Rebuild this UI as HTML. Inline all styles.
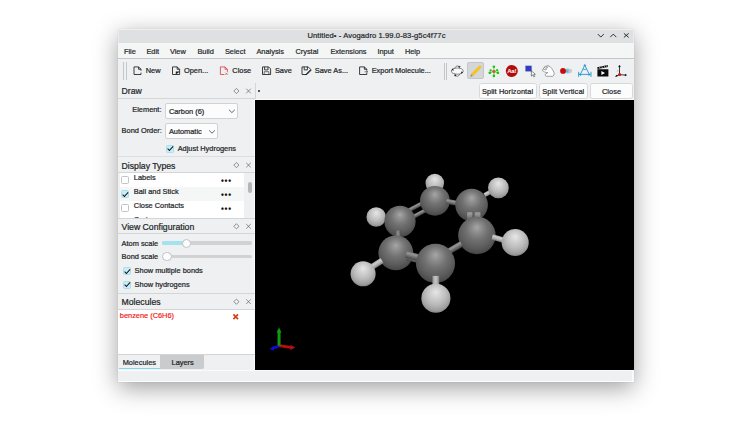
<!DOCTYPE html>
<html><head><meta charset="utf-8">
<title>Untitled - Avogadro</title>
<style>
html,body{margin:0;padding:0;background:#fff;}
body{width:752px;height:423px;position:relative;overflow:hidden;font-family:"Liberation Sans",sans-serif;font-size:7.4px;color:#232629;}
#frame{position:absolute;left:118px;top:28.5px;width:516px;height:353px;border-radius:3px 3px 0 0;box-shadow:0 6px 24px 0 rgba(0,0,0,.38),0 0 1px rgba(0,0,0,.25);overflow:hidden;background:#eff0f1}
#win{position:absolute;left:0;top:0;width:516px;height:353px;background:#eff0f1;}
#title{position:absolute;left:0;top:0;width:516px;height:14px;background:#dee0e2;border-radius:2.5px 2.5px 0 0;text-align:center;line-height:14.5px;font-size:7.6px;letter-spacing:0.09px;-webkit-text-stroke:0.2px #232629;padding-left:1px;box-sizing:border-box}
#menu{position:absolute;left:0;top:14px;width:516px;height:15.6px;background:#f4f5f5;border-bottom:0.6px solid #c4c6c8;}
#menu span{position:absolute;top:1.1px;line-height:16px;-webkit-text-stroke:0.2px #232629;margin-left:-0.1px}
.t{position:absolute;white-space:nowrap;line-height:10px;height:10px;-webkit-text-stroke:0.22px #232629;}
.h{position:absolute;white-space:nowrap;font-size:8.7px;line-height:12px;height:12px;left:3.5px;margin-top:0.6px;letter-spacing:0;-webkit-text-stroke:0.22px #232629;}
.ln{position:absolute;left:0;width:137px;height:0.7px;background:#d3d5d7;}
#vp{position:absolute;left:137.4px;top:71.5px;width:378.4px;height:269.6px;background:#000;box-shadow:-1.1px 0 0 #fafafa,0 -0.9px 0 #fafafa;}
.cb{position:absolute;width:8px;height:8px;border:0.6px solid #c2c4c6;border-radius:1.6px;background:#fff;box-sizing:border-box;}
.cb.on{background:#c9edf6;border-color:#a9def0;}
.cb.on:after{content:"";position:absolute;left:1.9px;top:-0.2px;width:2.2px;height:4.6px;border:solid #0c0c0c;border-width:0 1.3px 1.3px 0;transform:rotate(42deg);}
.btn{position:absolute;background:#fcfcfc;border:0.6px solid #d6d8da;border-radius:2.5px;box-sizing:border-box;text-align:center;line-height:15.8px;height:16.2px;top:54px;letter-spacing:0.1px;-webkit-text-stroke:0.22px #232629;}
.combo{position:absolute;background:#fcfcfc;border:0.6px solid #d0d2d4;border-radius:2px;box-sizing:border-box;height:15.7px;line-height:15.2px;padding-left:2.5px;-webkit-text-stroke:0.22px #232629;}
.ic{position:absolute;}
.dots{position:absolute;left:101.2px;font-size:8.2px;letter-spacing:0.75px;line-height:6px;font-weight:bold;color:#111;}
svg{overflow:visible}
</style></head><body>
<div id="frame"><div id="win">
<div id="title" style="box-shadow:inset 0 1px 0 #eef0f3,inset 0.8px 0 0 #eceef0,inset -0.8px 0 0 #eceef0">Untitled• - Avogadro 1.99.0-83-g5c4f77c</div>
<svg class="ic" style="left:478px;top:3.2px" width="34" height="7" viewBox="596 32.5 34 7" fill="none" stroke="#232629" stroke-width="0.95"><path d="M597.8 34.6 L600.8 37.6 L603.8 34.6"/><path d="M610.3 37.6 L613.3 34.6 L616.3 37.6"/><path d="M623.9 33.9 L628.7 37.9 M628.7 33.9 L623.9 37.9" transform="translate(0,0)"/></svg>
<div id="menu">
<span style="left:6px">File</span><span style="left:28.5px">Edit</span><span style="left:52px">View</span><span style="left:79.5px">Build</span><span style="left:107px">Select</span><span style="left:138.5px">Analysis</span><span style="left:177.5px">Crystal</span><span style="left:212.5px">Extensions</span><span style="left:259.5px">Input</span><span style="left:287px">Help</span>
</div>

<!-- toolbar -->
<div id="tb">
<div style="position:absolute;left:5.4px;top:33px;width:0.6px;height:18px;background:#c4c6c8"></div>
<div style="position:absolute;left:7.5px;top:33px;width:0.6px;height:18px;background:#c4c6c8"></div>
<div class="t" style="left:27.7px;top:37px">New</div>
<div class="t" style="left:66px;top:37px">Open...</div>
<div class="t" style="left:114.3px;top:37px">Close</div>
<div class="t" style="left:156.9px;top:37px">Save</div>
<div class="t" style="left:196.8px;top:37px">Save As...</div>
<div class="t" style="left:253.7px;top:37px">Export Molecule...</div>
<div style="position:absolute;left:326.4px;top:34px;width:0.6px;height:17px;background:#c4c6c8"></div>
<div style="position:absolute;left:328px;top:34px;width:0.6px;height:17px;background:#c4c6c8"></div>
<div style="position:absolute;left:349.4px;top:33.4px;width:16.6px;height:16.8px;background:#d4d6d8;border-radius:2px;border:0.5px solid #c3c5c7;box-sizing:border-box"></div>
</div>

<!-- viewport header -->
<div style="position:absolute;left:137px;top:54px;width:0.7px;height:288px;background:#d3d5d7"></div>
<div style="position:absolute;left:140.4px;top:61.2px;width:2px;height:2px;border-radius:1px;background:#1b2230"></div>
<div class="btn" style="left:360.5px;width:58.1px">Split Horizontal</div>
<div class="btn" style="left:420.5px;width:49.7px">Split Vertical</div>
<div class="btn" style="left:471.8px;width:43.6px">Close</div>
<div id="vp"><!--MOL--><svg style="position:absolute;left:0;top:0" width="378.4" height="269.6" viewBox="255.4 100 378.4 269.6">
<defs>
<radialGradient id="gc" cx="0.5" cy="0.4" r="0.62" fx="0.5" fy="0.28"><stop offset="0" stop-color="#a6a6a6"/><stop offset="0.2" stop-color="#8e8e8e"/><stop offset="0.45" stop-color="#727272"/><stop offset="0.75" stop-color="#5c5c5c"/><stop offset="0.92" stop-color="#4c4c4c"/><stop offset="1" stop-color="#404040"/></radialGradient>
<radialGradient id="gh" cx="0.5" cy="0.4" r="0.62" fx="0.5" fy="0.28"><stop offset="0" stop-color="#e6e6e6"/><stop offset="0.3" stop-color="#d0d0d0"/><stop offset="0.6" stop-color="#b9b9b9"/><stop offset="0.85" stop-color="#9e9e9e"/><stop offset="1" stop-color="#828282"/></radialGradient>
<linearGradient id="bc" x1="0" y1="0" x2="0" y2="1"><stop offset="0" stop-color="#747474"/><stop offset="0.28" stop-color="#969696"/><stop offset="0.6" stop-color="#707070"/><stop offset="1" stop-color="#444444"/></linearGradient>
<linearGradient id="bh" x1="0" y1="0" x2="0" y2="1"><stop offset="0" stop-color="#a8a8a8"/><stop offset="0.3" stop-color="#cccccc"/><stop offset="0.6" stop-color="#b4b4b4"/><stop offset="1" stop-color="#7a7a7a"/></linearGradient>
<linearGradient id="bv" x1="0" y1="0" x2="1" y2="0"><stop offset="0" stop-color="#8a8a8a"/><stop offset="0.4" stop-color="#c6c6c6"/><stop offset="0.7" stop-color="#b4b4b4"/><stop offset="1" stop-color="#7a7a7a"/></linearGradient>
<linearGradient id="bv3" x1="0" y1="0" x2="1" y2="0"><stop offset="0" stop-color="#5a5a5a"/><stop offset="0.4" stop-color="#8c8c8c"/><stop offset="0.7" stop-color="#787878"/><stop offset="1" stop-color="#484848"/></linearGradient>
<linearGradient id="gv" gradientUnits="userSpaceOnUse" x1="0" y1="212" x2="0" y2="220"><stop offset="0" stop-color="#a4a4a4"/><stop offset="0.5" stop-color="#868686"/><stop offset="1" stop-color="#585858"/></linearGradient>
</defs>
<circle cx="435.2" cy="183" r="9.30" fill="url(#gh)"/>
<circle cx="376.6" cy="217" r="9.75" fill="url(#gh)"/>
<rect x="0" y="-2.20" width="10.25" height="4.40" fill="url(#bh)" transform="translate(485.00 195.10) rotate(-28.6)"/>
<circle cx="498.8" cy="187.8" r="10.40" fill="url(#gh)"/>
<rect x="0" y="-2.00" width="18.70" height="4.00" fill="url(#bc)" transform="translate(408.00 211.00) rotate(-28.1)"/>
<rect x="0" y="-2.00" width="16.42" height="4.00" fill="url(#bc)" transform="translate(412.50 217.40) rotate(-28.0)"/>
<circle cx="435.3" cy="200.8" r="14.90" fill="url(#gc)"/>
<rect x="0" y="-2.50" width="15.46" height="5.00" fill="url(#bc)" transform="translate(446.80 201.30) rotate(10.4)"/>
<circle cx="400.4" cy="221.4" r="15.60" fill="url(#gc)"/>
<circle cx="472" cy="205" r="16.30" fill="url(#gc)"/>
<rect x="395.90" y="230.60" width="5.40" height="14.40" fill="url(#bv3)"/>
<rect x="467.45" y="212.30" width="5.30" height="15.70" rx="1.2" fill="url(#gv)"/>
<rect x="475.15" y="212.30" width="5.70" height="15.70" rx="1.2" fill="url(#gv)"/>
<circle cx="396.2" cy="252.9" r="17.40" fill="url(#gc)"/>
<circle cx="477.3" cy="235.4" r="18.75" fill="url(#gc)"/>
<rect x="0" y="-3.00" width="17.37" height="6.00" fill="url(#bc)" transform="translate(407.20 257.20) rotate(14.7)"/>
<rect x="0" y="-3.40" width="18.09" height="6.80" fill="url(#bc)" transform="translate(406.50 254.40) rotate(14.7)"/>
<rect x="0" y="-3.00" width="19.77" height="6.00" fill="url(#bc)" transform="translate(445.00 253.90) rotate(-30.7)"/>
<rect x="0" y="-2.90" width="17.23" height="5.80" fill="url(#bh)" transform="translate(368.00 269.80) rotate(-32.7)"/>
<rect x="0" y="-2.65" width="16.04" height="5.30" fill="url(#bh)" transform="translate(492.60 236.90) rotate(16.3)"/>
<circle cx="363.5" cy="273.8" r="12.55" fill="url(#gh)"/>
<circle cx="515.6" cy="242.5" r="13.55" fill="url(#gh)"/>
<circle cx="435.9" cy="263.4" r="19.55" fill="url(#gc)"/>
<rect x="432.80" y="275.90" width="6.80" height="16.10" fill="url(#bv)"/>
<circle cx="436.3" cy="298.3" r="14.55" fill="url(#gh)"/>
<g stroke-linecap="butt">
<line x1="279.5" y1="346" x2="273" y2="348.2" stroke="#0c0cd8" stroke-width="2.6"/><path d="M274.6 345.8 L270 349 L274.4 350.8Z" fill="#0c0cd8"/>
<line x1="279.4" y1="345.6" x2="291.4" y2="347.4" stroke="#b80e0e" stroke-width="2.8"/><path d="M291 344.9 L295.7 347.5 L290.6 349.9Z" fill="#b80e0e"/>
<line x1="279.45" y1="345.6" x2="279.45" y2="332" stroke="#129a12" stroke-width="3"/><path d="M277 332.6 L279.45 327.6 L281.9 332.6Z" fill="#129a12"/>
</g>
</svg><!--/MOL--></div>

<div style="position:absolute;left:0;top:341.2px;width:516px;height:1.1px;background:#fbfbfb"></div>
<div style="position:absolute;left:513.8px;top:342px;width:2.2px;height:11px;background:#fafafa"></div>
<div style="position:absolute;left:0;top:352px;width:516px;height:1px;background:#fdfdfd"></div>
<!-- left docks -->
<div id="dock" style="position:absolute;left:0;top:0;width:137px;height:353px">
 <!-- Draw -->
 <div class="h" style="top:56.3px">Draw</div>
 <div class="ln" style="top:69.9px"></div>
 <div class="t" style="left:14.3px;top:76.5px">Element:</div>
 <div class="combo" style="left:47.4px;top:74.4px;width:72.8px">Carbon (6)</div>
 <div class="t" style="left:3.6px;top:97px">Bond Order:</div>
 <div class="combo" style="left:47.4px;top:94.9px;width:52.4px">Automatic</div>
 <div class="cb on" style="left:48.2px;top:116px"></div>
 <div class="t" style="left:59.7px;top:115px">Adjust Hydrogens</div>
 <!-- Display types -->
 <div class="ln" style="top:127.6px;height:1px;background:#dcdee0"></div>
 <div class="h" style="top:130.8px">Display Types</div>
 <div class="ln" style="top:143.9px"></div>
 <div style="position:absolute;left:1.8px;top:144.5px;width:124.5px;height:44.8px;background:#fff;overflow:hidden">
   <div style="position:absolute;left:0;top:14.3px;width:124.5px;height:13.8px;background:#f5f6f6"></div>
   <div class="cb" style="left:1.6px;top:3px"></div>
   <div class="cb on" style="left:1.6px;top:17px"></div>
   <div class="cb" style="left:1.6px;top:30.8px"></div>
   <div class="t" style="left:14px;top:0.2px">Labels</div>
   <div class="t" style="left:14px;top:13.8px">Ball and Stick</div>
   <div class="t" style="left:14px;top:27.8px">Close Contacts</div>
   <div class="t" style="left:14px;top:42.0px">Cartoons</div>
   <div class="dots" style="top:6.1px">•••</div>
   <div class="dots" style="top:20.1px">•••</div>
   <div class="dots" style="top:34.1px">•••</div>
 </div>
 <div style="position:absolute;left:129.8px;top:153.9px;width:3.8px;height:11px;border-radius:2px;background:#b4b6b8"></div>
 <!-- View configuration -->
 <div class="ln" style="top:189.4px"></div>
 <div class="h" style="top:191.8px">View Configuration</div>
 <div class="ln" style="top:204.9px"></div>
 <div class="t" style="left:3.6px;top:210.1px">Atom scale</div>
 <div style="position:absolute;left:44px;top:213.2px;width:90px;height:3.4px;border-radius:1.7px;background:#d0d2d4;margin-top:-0.3px"></div>
 <div style="position:absolute;left:44px;top:213.2px;width:24px;height:3.4px;border-radius:1.7px;background:#a3e2ef;margin-top:-0.3px"></div>
 <div style="position:absolute;left:63.9px;top:210px;width:9.2px;height:9.2px;border-radius:5px;background:#fcfcfc;border:0.6px solid #c0c2c4;box-sizing:border-box"></div>
 <div class="t" style="left:3.6px;top:223.8px">Bond scale</div>
 <div style="position:absolute;left:44px;top:226.9px;width:90px;height:3.4px;border-radius:1.7px;background:#d0d2d4;margin-top:-0.3px"></div>
 <div style="position:absolute;left:44.4px;top:223.7px;width:9.2px;height:9.2px;border-radius:5px;background:#fcfcfc;border:0.6px solid #c0c2c4;box-sizing:border-box"></div>
 <div class="cb on" style="left:4.7px;top:238.2px"></div>
 <div class="t" style="left:16.6px;top:237.2px">Show multiple bonds</div>
 <div class="cb on" style="left:4.7px;top:252px"></div>
 <div class="t" style="left:16.6px;top:251px">Show hydrogens</div>
 <!-- Molecules -->
 <div class="ln" style="top:264.7px"></div>
 <div class="h" style="top:267.2px">Molecules</div>
 <div class="ln" style="top:280.4px"></div>
 <div style="position:absolute;left:0.4px;top:281px;width:135.6px;height:44.8px;background:#fff"></div>
 <div class="t" style="left:1.8px;top:282.8px;color:#f01010;-webkit-text-stroke:0.15px #f01010">benzene (C6H6)</div>
 <div class="ln" style="top:325.6px"></div>
 <div style="position:absolute;left:42.4px;top:326.2px;width:43.3px;height:14px;background:#c9cbcc;border-radius:0 0 2px 0"></div>
 <div style="position:absolute;left:0.6px;top:339px;width:41.8px;height:1.3px;background:#7fd9ea"></div>
 <div class="t" style="left:4.7px;top:329.6px">Molecules</div>
 <div class="t" style="left:53.6px;top:329.6px">Layers</div>
</div>
<!--ICONS--><svg style="position:absolute;left:0;top:0" width="516" height="100" viewBox="118 28.5 516 100" fill="none">
<!-- New -->
<g stroke="#1c1e20" stroke-width="0.85" stroke-linejoin="miter">
<path d="M141 72.2 V74 H134 V66.4 H138.6 L141 68.8 V70.2"/><path d="M138.6 66.4 V68.8 H141"/>
<!-- Open -->
<path d="M172.5 66.4 H177.2 L179.6 68.8 V74 H172.5 Z"/><path d="M177.2 66.4 V68.8 H179.6"/><path d="M176 73.6 V71.2 H179.2 Z" fill="#1c1e20" stroke-width="0.4"/>
<!-- Save -->
<path d="M262.5 66.4 H268.6 L270.6 68.4 V74 H262.5 Z"/><path d="M264.6 66.4 V69.4 H268 V66.4"/><path d="M264.2 74 V71.2 H268.9 V74" stroke-width="0.6"/>
<!-- Save as -->
<path d="M306.5 74 H302 V66.4 H308.2 L310.4 68.6"/><path d="M304.2 66.4 V69.4 H307.4 V66.4"/><path d="M310.8 68.8 L306.6 73 L305.4 74.4 L307.2 73.8 L311.2 69.8 Z" fill="#1c1e20" stroke-width="0.5"/>
<!-- Export -->
<path d="M366.8 72.6 V74 H359.6 V66.4 H364.4 L366.8 68.8 V70"/><path d="M364.4 66.4 V68.8 H366.8"/><path d="M364.6 71.3 H367.6 M366.4 70.2 L367.6 71.3 L366.4 72.4" stroke-width="0.6"/>
</g>
<!-- Close -->
<g stroke="#da4453" stroke-width="0.85"><path d="M224.4 74 H220.4 V66.4 H225 L227.4 68.8 V71.4"/><path d="M225 66.4 V68.8 H227.4"/><path d="M225.4 72.2 L227.6 74.4 M227.6 72.2 L225.4 74.4" stroke-width="0.7"/></g>
<!-- Navigate -->
<g stroke="#2a2a2a" stroke-width="0.55"><ellipse cx="457.3" cy="70.6" rx="2.9" ry="5.2" fill="#fafafa"/><ellipse cx="457.3" cy="70.6" rx="6" ry="3.1" fill="#fafafa"/>
<path d="M451.8 69.6 l1.2 -1.6 l0.5 1.9z M458.6 65.5 l1.9 0.5 l-1.5 1.1z M456 75.7 l-1.9 -0.5 l1.5 -1.1z M462.8 71.6 l-1.2 1.6 l-0.5 -1.9z" fill="#111" stroke-width="0.25"/></g>
<!-- Pencil -->
<path d="M479.7 65 L481.5 66.8 L472.9 75.4 L471.1 73.6 Z" fill="#f8c712" stroke="#e4b010" stroke-width="0.25"/><path d="M471.1 73.6 L472.9 75.4 L470.2 76.4 Z" fill="#8a8f98"/>
<!-- Template -->
<g stroke="#20b020" stroke-width="0.6"><path d="M493.9 70.9 L493.9 66.2 M493.9 70.9 L490.5 69.9 M493.9 70.9 L497.3 69.8 M493.9 70.9 L489.8 72.3 M493.9 70.9 L497.9 72.3 M493.9 70.9 L493.9 75.4"/></g>
<g fill="#12c812"><circle cx="493.9" cy="66.2" r="1.3"/><circle cx="489.8" cy="72.3" r="1.35"/><circle cx="497.9" cy="72.3" r="1.35"/><circle cx="493.9" cy="75.4" r="1.3"/><circle cx="490.6" cy="69.8" r="1.1"/><circle cx="497.2" cy="69.7" r="1.1"/></g><circle cx="493.9" cy="70.9" r="1.5" fill="#e8501a"/>
<!-- Label -->
<circle cx="511.8" cy="70.6" r="6" fill="#b30c0c"/>
<text x="511.7" y="72.8" font-family="Liberation Sans, sans-serif" font-size="6.1" font-weight="bold" fill="#fff" text-anchor="middle" letter-spacing="-0.25">Aa!</text>
<!-- Select -->
<rect x="525.5" y="65.3" width="6.1" height="5.5" fill="#2f3cc0" stroke="#5a66d8" stroke-width="0.4" stroke-dasharray="0.8 0.5"/>
<path d="M531.4 70.4 L531.4 75.6 L532.8 74.4 L533.8 76.4 L534.7 76 L533.7 74 L535.4 73.8 Z" fill="#fafafa" stroke="#222" stroke-width="0.5"/>
<!-- Hand -->
<path d="M548.6 65.3 C550.6 66 553 69.4 554 72 C554.5 74 553.6 75.5 552.6 75.8 L546.3 75.8 C545 75.4 545 74 545.7 73.4 C546.4 72.8 547.6 72.8 547.8 72 C546 72.4 543.4 71.1 542.4 70 C542 69 543 68.6 544 68.8 C543 68 543.4 67 544.4 67 C544 66.2 545 65.6 546 66 C546.6 65.2 547.8 65 548.6 65.3 Z" fill="#fdfdfd" stroke="#5a5a5a" stroke-width="0.55" stroke-linejoin="round"/>
<path d="M544.2 68.9 C545 69.4 546.2 69.3 546.8 68.8 M544.6 67.1 C545.4 67.8 546.8 67.8 547.4 67.2 M546.2 66.1 C546.8 66.8 548 66.8 548.4 66.3" fill="none" stroke="#4a4a4a" stroke-width="0.6"/>
<!-- Bond centric -->
<ellipse cx="567.6" cy="70.5" rx="3.2" ry="2.5" fill="#55cdf0" opacity="0.85"/><path d="M565 70.5 H569" stroke="#d01818" stroke-width="0.5"/><circle cx="570.2" cy="70.5" r="1.9" fill="#c9c9c9"/><circle cx="563" cy="70.4" r="2.85" fill="#c80a0a"/>
<!-- Measure -->
<g stroke="#2a9bd1" stroke-width="0.95"><path d="M584.8 64.6 L580.9 72.8 M584.8 64.6 L588.7 72.8 M579 73.9 H590.6 M578.6 71.3 V76.3 M591 71.3 V76.3 M583 68.4 Q584.8 69.8 586.6 68.4" /><path d="M579 73.9 l2 -1.4 v2.8z M590.6 73.9 l-2 -1.4 v2.8z M584.8 63.4 l-1.1 2 h2.2z" fill="#2a9bd1" stroke-width="0.3"/></g>
<!-- Clapper -->
<path d="M597.4 68.8 H608.4 V76 H597.4 Z" fill="#0a0a0a"/><path d="M597.2 66.8 L607.6 64.6 L608 66.4 L597.6 68.6 Z" fill="#0a0a0a"/>
<path d="M599.4 66.4 l0.6 1.6 M601.8 65.9 l0.6 1.6 M604.2 65.4 l0.6 1.6 M606.4 64.9 l0.6 1.6" stroke="#eee" stroke-width="0.6"/>
<path d="M601.4 70.4 L605 72.4 L601.4 74.4 Z" fill="#fff"/>
<!-- Axes -->
<g stroke="#0a0a0a" stroke-width="0.8"><path d="M619.5 65.8 V74.2 M619.5 74.2 L616 75.6 M619.5 74.2 L626 74.6"/><path d="M619.5 64.6 l-1 1.8 h2z M615.2 76 l1.6 -1.4 l0.6 1.2z M626.8 74.6 l-1.8 -0.9 v1.8z" fill="#0a0a0a" stroke-width="0.3"/></g><circle cx="619.6" cy="74" r="1.5" fill="#d01010"/><circle cx="617.6" cy="70.4" r="0.9" fill="#c9c9c9"/>
<!-- dock header icons -->
<g stroke="#4a4d50" stroke-width="0.6">
<path d="M236.4 87.9 L239.0 90.5 L236.4 93.1 L233.8 90.5 Z M246.2 88.2 L250.8 92.8 M250.8 88.2 L246.2 92.8"/>
<path d="M236.4 162.0 L239.0 164.6 L236.4 167.2 L233.8 164.6 Z M246.2 162.3 L250.8 166.9 M250.8 162.3 L246.2 166.9"/>
<path d="M236.4 223.2 L239.0 225.8 L236.4 228.4 L233.8 225.8 Z M246.2 223.5 L250.8 228.1 M250.8 223.5 L246.2 228.1"/>
<path d="M236.4 298.6 L239.0 301.2 L236.4 303.8 L233.8 301.2 Z M246.2 298.9 L250.8 303.5 M250.8 298.9 L246.2 303.5"/>
</g>
<!-- combo arrows -->
<g stroke="#232629" stroke-width="0.7"><path d="M229 109.3 L231.9 112.1 L234.8 109.3 M209.1 129.9 L212 132.7 L214.9 129.9"/></g>
<!-- red X -->
<path d="M233.4 313.8 L238 318.6 M238 313.8 L233.4 318.6" stroke="#d8401c" stroke-width="1.7"/>
</svg><!--/ICONS-->
</div></div>
</body></html>
